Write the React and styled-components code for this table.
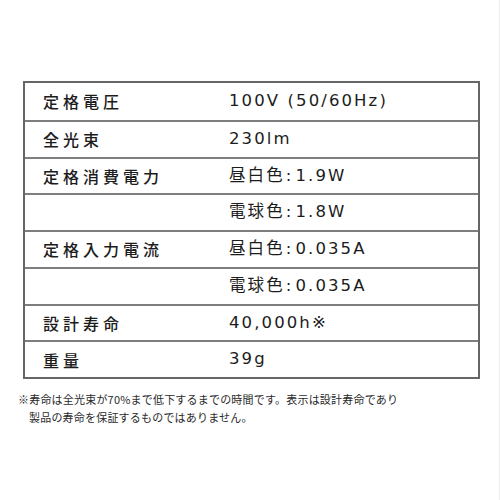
import React from 'react';
import styled, { createGlobalStyle } from 'styled-components';

const GlobalStyle = createGlobalStyle`
  html, body {
    margin: 0;
    padding: 0;
    background: #fff;
  }
  body {
    font-family: "Noto Sans CJK JP", "Noto Sans", sans-serif;
    color: #1c1c1c;
  }
`;

const Page = styled.div`
  box-sizing: border-box;
  width: 500px;
  height: 500px;
  padding: 81px 20px 0 18px;
  border-right: 1px solid #ececec;
`;

const Table = styled.div`
  box-sizing: border-box;
  width: 457px;
  margin-left: 5px;
  border: 2px solid #666;
`;

const Row = styled.div`
  box-sizing: border-box;
  display: grid;
  grid-template-columns: 204px 1fr;
  align-items: center;
  height: 36.75px;
  border-top: ${p => (p.first ? 'none' : '2px solid #7e7e7e')};
`;

const Label = styled.div`
  padding-left: 18px;
  font-size: 16px;
  font-weight: 500;
  letter-spacing: 4px;
  line-height: 1;
  white-space: nowrap;
`;

const Value = styled.div`
  font-family: "DejaVu Sans", "Noto Sans CJK JP", sans-serif;
  font-size: 16.5px;
  letter-spacing: 2.1px;
  line-height: 1;
  white-space: nowrap;
`;

const Colon = styled.span`
  padding: 0 2px 0 1px;
`;

const Note = styled.div`
  margin-top: 11px;
  font-size: 11px;
  line-height: 18px;
  color: #2a2a2a;
  letter-spacing: 0.2px;
`;

const NoteLine = styled.div`
  padding-left: ${p => (p.indent ? '11px' : '0')};
  white-space: nowrap;
`;

const specs = [
  ['定格電圧', '100V (50/60Hz)'],
  ['全光束', '230lm'],
  ['定格消費電力', '昼白色:1.9W'],
  ['', '電球色:1.8W'],
  ['定格入力電流', '昼白色:0.035A'],
  ['', '電球色:0.035A'],
  ['設計寿命', '40,000h※'],
  ['重量', '39g'],
];

function renderValue(value) {
  const parts = value.split(':');
  if (parts.length < 2) return value;
  return (
    <>
      {parts[0]}
      <Colon>:</Colon>
      {parts[1]}
    </>
  );
}

export default function App() {
  return (
    <>
      <GlobalStyle />
      <Page>
        <Table>
          {specs.map(([label, value], i) => (
            <Row key={i} first={i === 0}>
              <Label>{label}</Label>
              <Value>{renderValue(value)}</Value>
            </Row>
          ))}
        </Table>
        <Note>
          <NoteLine>※寿命は全光束が70%まで低下するまでの時間です。表示は設計寿命であり</NoteLine>
          <NoteLine indent>製品の寿命を保証するものではありません。</NoteLine>
        </Note>
      </Page>
    </>
  );
}
